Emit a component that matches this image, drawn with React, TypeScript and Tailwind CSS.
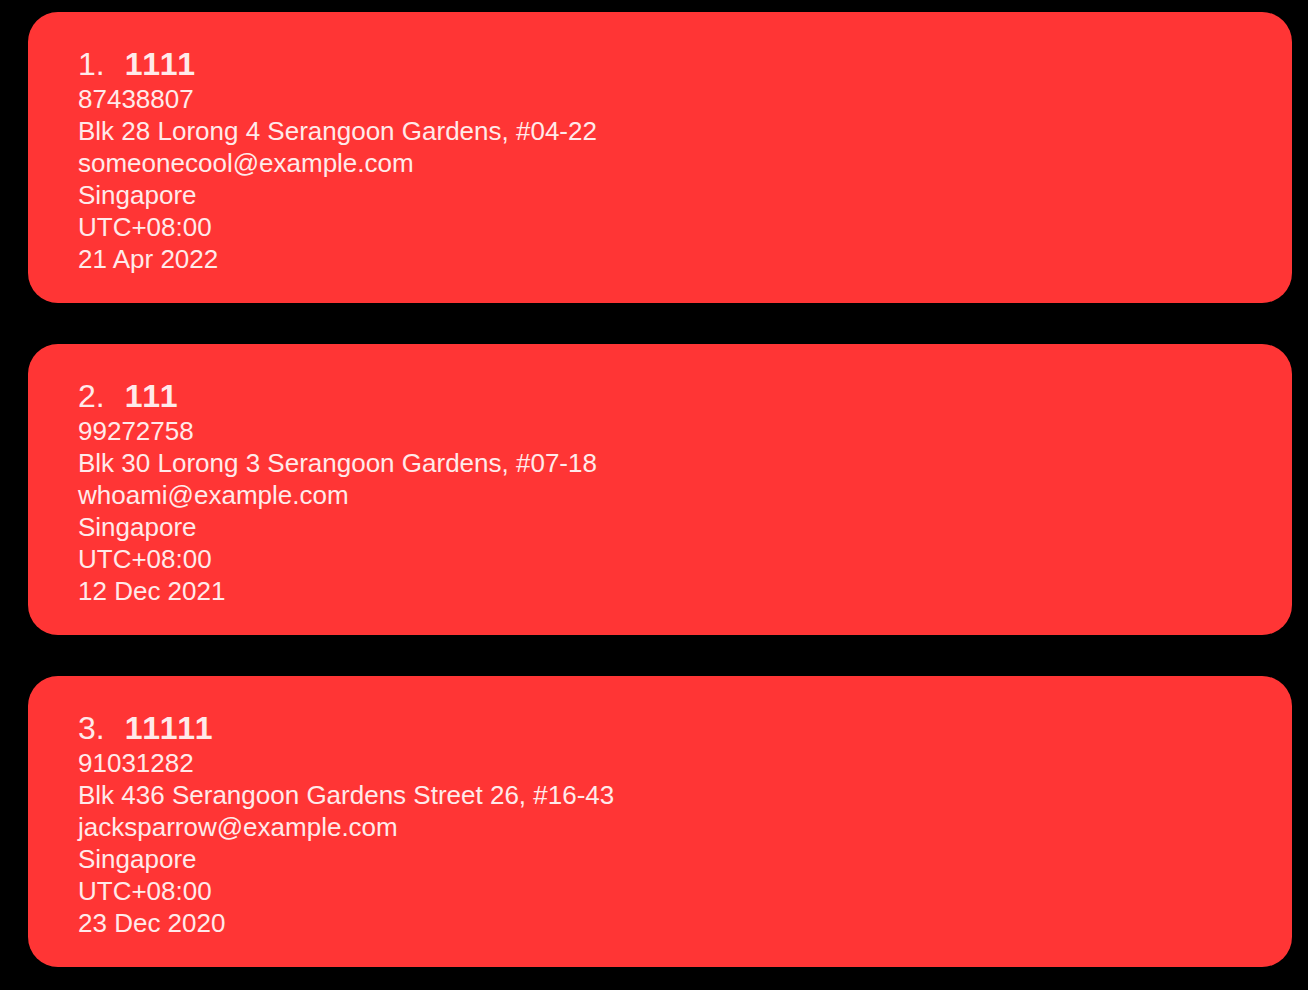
import React from "react";

const people = [
  {
    idx: 1,
    name: "1111",
    phone: "87438807",
    address: "Blk 28 Lorong 4 Serangoon Gardens, #04-22",
    email: "someonecool@example.com",
    country: "Singapore",
    tz: "UTC+08:00",
    date: "21 Apr 2022",
  },
  {
    idx: 2,
    name: "111",
    phone: "99272758",
    address: "Blk 30 Lorong 3 Serangoon Gardens, #07-18",
    email: "whoami@example.com",
    country: "Singapore",
    tz: "UTC+08:00",
    date: "12 Dec 2021",
  },
  {
    idx: 3,
    name: "11111",
    phone: "91031282",
    address: "Blk 436 Serangoon Gardens Street 26, #16-43",
    email: "jacksparrow@example.com",
    country: "Singapore",
    tz: "UTC+08:00",
    date: "23 Dec 2020",
  },
];

export default function App() {
  return (
    <div className="min-h-screen bg-black pl-[28px] pr-[16px] pt-[12px] flex flex-col gap-[41px] text-[#ffeaea] font-['Liberation_Sans',Arial,sans-serif]">
      {people.map((p) => (
        <div
          key={p.idx}
          className="bg-[#ff3535] rounded-[30px] pl-[50px] pt-[33px] h-[291px]"
        >
          <div className="flex items-baseline text-[32px] leading-[38px]">
            <span>{p.idx}.</span>
            <span className="font-bold ml-[20px] tracking-[1.5px]">{p.name}</span>
          </div>
          <div className="text-[26px] leading-[32px]">
            <div>{p.phone}</div>
            <div>{p.address}</div>
            <div>{p.email}</div>
            <div>{p.country}</div>
            <div>{p.tz}</div>
            <div>{p.date}</div>
          </div>
        </div>
      ))}
    </div>
  );
}
